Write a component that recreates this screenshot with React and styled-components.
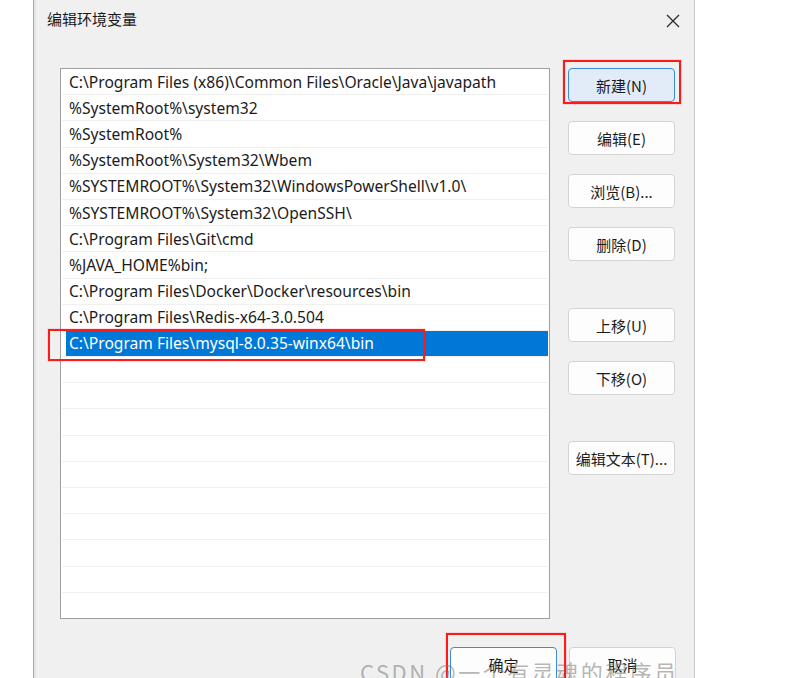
import React from "react"
import styled, { createGlobalStyle } from "styled-components"

const GlobalStyle = createGlobalStyle`
  html, body {
    margin: 0;
    padding: 0;
    background: #ffffff;
    overflow: hidden;
  }
  body {
    font-family: "Noto Sans", "Noto Sans CJK SC", sans-serif;
  }
`

const paths = [
  "C:\\Program Files (x86)\\Common Files\\Oracle\\Java\\javapath",
  "%SystemRoot%\\system32",
  "%SystemRoot%",
  "%SystemRoot%\\System32\\Wbem",
  "%SYSTEMROOT%\\System32\\WindowsPowerShell\\v1.0\\",
  "%SYSTEMROOT%\\System32\\OpenSSH\\",
  "C:\\Program Files\\Git\\cmd",
  "%JAVA_HOME%bin;",
  "C:\\Program Files\\Docker\\Docker\\resources\\bin",
  "C:\\Program Files\\Redis-x64-3.0.504",
  "C:\\Program Files\\mysql-8.0.35-winx64\\bin",
]

const Page = styled.div`
  position: relative;
  display: flex;
  height: 678px;
  width: 797px;
  overflow: hidden;
`

const BehindEdge = styled.div`
  width: 33px;
  flex: none;
  border-right: 1px solid #a9a9a9;
  background: #ffffff;
`

const Dialog = styled.div`
  width: 658px;
  flex: none;
  background: #f0f0f0;
  border-left: 2px solid #e2e2e2;
  border-right: 1px solid #c9c9c9;
  display: flex;
  flex-direction: column;
`

const TitleBar = styled.div`
  height: 40px;
  flex: none;
  display: flex;
  align-items: center;
  justify-content: space-between;
  padding: 0 14px 0 11px;
  font-family: "Noto Sans CJK SC", sans-serif;
  font-size: 15px;
  color: #1a1a1a;
`

const Title = styled.span`
  margin-top: -3px;
`

const Close = styled.svg`
  width: 14px;
  height: 14px;
  margin-top: 1px;
`

const Body = styled.div`
  display: flex;
  padding: 28px 0 0 24px;
  gap: 18px;
`

const ListBox = styled.div`
  width: 486px;
  height: 549px;
  background: #ffffff;
  border: 1px solid #a0a0a0;
  padding: 0 1px 0 1px;
  overflow: hidden;
`

const Row = styled.div`
  height: 26.2px;
  box-sizing: border-box;
  border-bottom: 1px solid #f0f0f0;
  padding: 0 0 0 4px;
  display: flex;
  align-items: center;
`

const Label = styled.div`
  flex: 1;
  height: 100%;
  display: flex;
  align-items: center;
  padding-left: 3px;
  font-size: 15.6px;
  color: ${(p) => (p.selected ? "#ffffff" : "#1b1b1b")};
  background: ${(p) => (p.selected ? "#0078d7" : "transparent")};
  white-space: nowrap;
`

const ButtonColumn = styled.div`
  display: flex;
  flex-direction: column;
  gap: 19px;
  width: 107px;
`

const Button = styled.div`
  position: relative;
  height: 34px;
  width: 107px;
  box-sizing: border-box;
  border-radius: 4px;
  border: 1px solid ${(p) => (p.primary ? "#3c8ad8" : "#d3d3d3")};
  background: ${(p) => (p.filled ? "#e1ecf8" : "#fdfdfd")};
  display: flex;
  align-items: center;
  justify-content: center;
  font-family: "Noto Sans CJK SC", sans-serif;
  font-size: 15px;
  color: #1b1b1b;
  margin-top: ${(p) => p.push || 0}px;
  flex: none;
  white-space: nowrap;
`

const Mark = styled.div`
  position: absolute;
  border: 2px solid #ff1a1a;
  box-shadow: 0 0 1px rgba(255, 0, 0, 0.6);
  pointer-events: none;
  left: ${(p) => p.x}px;
  top: ${(p) => p.y}px;
  width: ${(p) => p.w}px;
  height: ${(p) => p.h}px;
`

const Footer = styled.div`
  display: flex;
  gap: 12px;
  padding: 28px 0 0 414px;
`

const Watermark = styled.div`
  position: absolute;
  left: 360px;
  top: 655px;
  font-family: "Noto Sans CJK SC", sans-serif;
  font-size: 22px;
  color: rgba(120, 120, 120, 0.55);
  white-space: nowrap;
  letter-spacing: 2.5px;
`

export default function App() {
  return (
    <>
      <GlobalStyle />
      <Page>
        <BehindEdge />
        <Dialog>
          <TitleBar>
            <Title>编辑环境变量</Title>
            <Close viewBox="0 0 14 14">
              <path d="M1 1 L13 13 M13 1 L1 13" stroke="#2a2a2a" strokeWidth="1.3" />
            </Close>
          </TitleBar>
          <Body>
            <ListBox>
              {Array.from({ length: 21 }).map((_, i) => (
                <Row key={i}>
                  <Label selected={i === 10}>{paths[i] || ""}</Label>
                </Row>
              ))}
            </ListBox>
            <ButtonColumn>
              <Button primary filled>
                新建(N)
              </Button>
              <Button>编辑(E)</Button>
              <Button>浏览(B)...</Button>
              <Button>删除(D)</Button>
              <Button push={28}>上移(U)</Button>
              <Button>下移(O)</Button>
              <Button push={27}>编辑文本(T)...</Button>
            </ButtonColumn>
          </Body>
          <Footer>
            <Button primary>确定</Button>
            <Button>取消</Button>
          </Footer>
        </Dialog>
        <Mark x={563} y={60} w={114} h={40} />
        <Mark x={48} y={329} w={373} h={28} />
        <Mark x={446} y={633} w={116} h={60} />
        <Watermark>CSDN @一个有灵魂的程序员</Watermark>
      </Page>
    </>
  )
}
